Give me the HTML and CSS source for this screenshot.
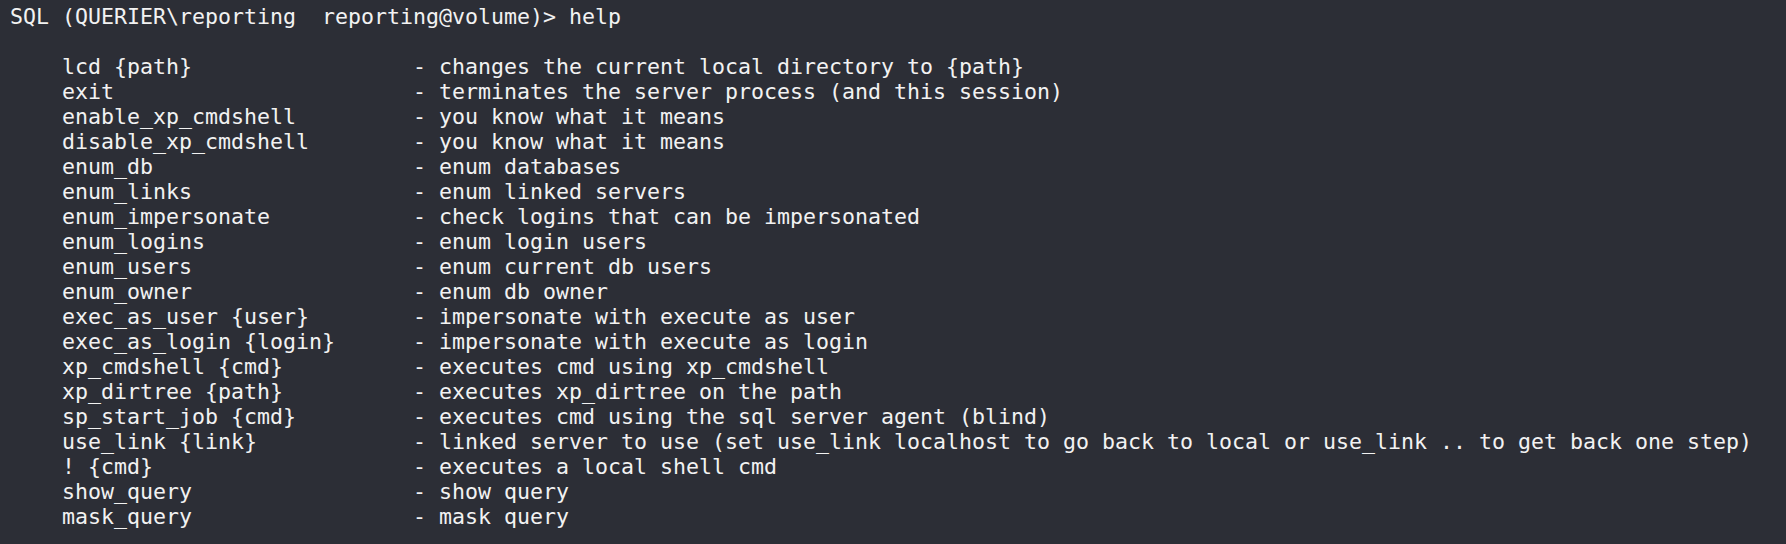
FILE: index.html
```html
<!DOCTYPE html>
<html lang="en">
<head>
<meta charset="utf-8">
<title>SQL help</title>
<link rel="stylesheet" href="styles.css">
</head>
<body>
<main class="terminal">
  <div class="prompt">SQL (QUERIER\reporting  reporting@volume)&gt; help</div>
  <div class="blank"></div>
  <div class="help">
    <span class="cmd">lcd {path}</span><span class="desc">- changes the current local directory to {path}</span>
    <span class="cmd">exit</span><span class="desc">- terminates the server process (and this session)</span>
    <span class="cmd">enable_xp_cmdshell</span><span class="desc">- you know what it means</span>
    <span class="cmd">disable_xp_cmdshell</span><span class="desc">- you know what it means</span>
    <span class="cmd">enum_db</span><span class="desc">- enum databases</span>
    <span class="cmd">enum_links</span><span class="desc">- enum linked servers</span>
    <span class="cmd">enum_impersonate</span><span class="desc">- check logins that can be impersonated</span>
    <span class="cmd">enum_logins</span><span class="desc">- enum login users</span>
    <span class="cmd">enum_users</span><span class="desc">- enum current db users</span>
    <span class="cmd">enum_owner</span><span class="desc">- enum db owner</span>
    <span class="cmd">exec_as_user {user}</span><span class="desc">- impersonate with execute as user</span>
    <span class="cmd">exec_as_login {login}</span><span class="desc">- impersonate with execute as login</span>
    <span class="cmd">xp_cmdshell {cmd}</span><span class="desc">- executes cmd using xp_cmdshell</span>
    <span class="cmd">xp_dirtree {path}</span><span class="desc">- executes xp_dirtree on the path</span>
    <span class="cmd">sp_start_job {cmd}</span><span class="desc">- executes cmd using the sql server agent (blind)</span>
    <span class="cmd">use_link {link}</span><span class="desc">- linked server to use (set use_link localhost to go back to local or use_link .. to get back one step)</span>
    <span class="cmd">! {cmd}</span><span class="desc">- executes a local shell cmd</span>
    <span class="cmd">show_query</span><span class="desc">- show query</span>
    <span class="cmd">mask_query</span><span class="desc">- mask query</span>
  </div>
</main>
</body>
</html>
```
FILE: styles.css
```css
html, body {
  margin: 0;
  padding: 0;
  background: #2c2e36;
}
.terminal {
  box-sizing: border-box;
  width: 1786px;
  height: 544px;
  padding: 4px 0 0 10px;
  background: #2c2e36;
  color: #f2f2f2;
  font-family: "DejaVu Sans Mono", "Liberation Mono", monospace;
  font-size: 21.6px;
  line-height: 25px;
}
.prompt, .blank {
  height: 25px;
  white-space: pre;
}
.help {
  display: grid;
  grid-template-columns: 27ch auto;
  padding-left: 4ch;
}
.cmd, .desc {
  display: block;
  height: 25px;
  white-space: pre;
}
```
